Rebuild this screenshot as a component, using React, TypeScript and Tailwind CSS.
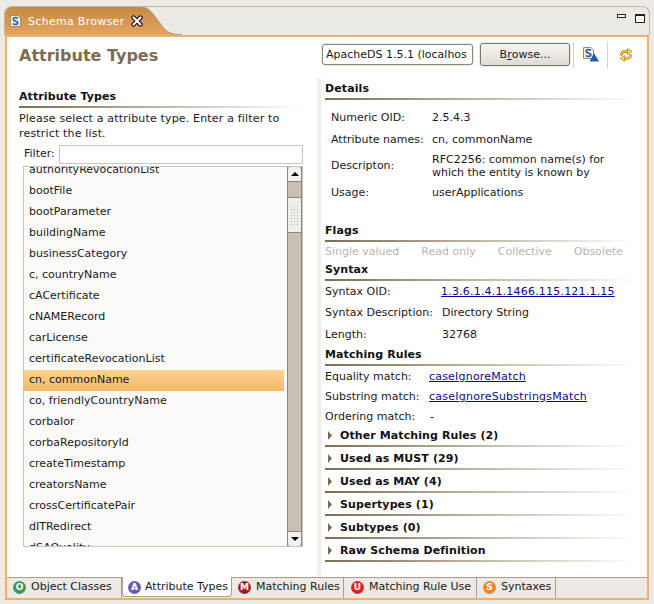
import React from "react";

const attrs = ["authorityRevocationList","bootFile","bootParameter","buildingName","businessCategory","c, countryName","cACertificate","cNAMERecord","carLicense","certificateRevocationList","cn, commonName","co, friendlyCountryName","corbaIor","corbaRepositoryId","createTimestamp","creatorsName","crossCertificatePair","dITRedirect","dSAQuality"];
const sections = ["Other Matching Rules (2)","Used as MUST (29)","Used as MAY (4)","Supertypes (1)","Subtypes (0)","Raw Schema Definition"];
const font = { fontFamily: '"DejaVu Sans", sans-serif' };

function Rule() {
  return <div className="h-[2px] bg-gradient-to-r from-[#7f6d53] via-[#b5a894] via-40% to-white" />;
}

function Heading({ children, className = "" }: { children: React.ReactNode; className?: string }) {
  return (
    <div className={className}>
      <div className="h-[18px] text-[11px] leading-[18px] font-bold tracking-[0.1px] text-[#111]">{children}</div>
      <Rule />
    </div>
  );
}

function Row({ label, children, labelW, className = "h-[21px]" }: { label: string; children: React.ReactNode; labelW: string; className?: string }) {
  return (
    <div className={`flex items-center pt-[2px] ${className}`}>
      <div className={`shrink-0 ${labelW}`}>{label}</div>
      <div>{children}</div>
    </div>
  );
}

function Section({ title }: { title: string }) {
  return (
    <div className="h-[23px]">
      <div className="flex h-[19px] items-center">
        <svg width="15" height="13" viewBox="0 0 15 13" className="shrink-0"><path d="M3 2 L7 6.5 L3 11 Z" fill="#7a6a50" /></svg>
        <span className="text-[11px] font-bold leading-[16px] tracking-[0.1px] text-[#111]">{title}</span>
      </div>
      <Rule />
    </div>
  );
}

function TabBadge({ color, letter }: { color: string; letter: string }) {
  return (
    <span className={`flex h-[13px] w-[13px] shrink-0 items-center justify-center rounded-full text-[9px] font-bold leading-none text-white ${color}`}>{letter}</span>
  );
}

function SchemaIcon({ triangle = false }: { triangle?: boolean }) {
  return (
    <svg width={triangle ? 16 : 11} height={triangle ? 15 : 12} viewBox={triangle ? "0 0 16 15" : "0 0 11 12"} className="shrink-0">
      <path d="M0.5 0.5 H8 L10.5 3 V11.5 H0.5 Z" fill="#f7f3e2" stroke="#9a8c63" />
      <path d="M7.8 3.4 C6.5 2.2 3.2 2.2 3.2 4.4 C3.2 6.5 7.8 5.6 7.8 7.8 C7.8 9.8 4.2 9.8 2.8 8.6" fill="none" stroke="#2f63a8" strokeWidth="1.8" />
      {triangle && <path d="M11 6 L16 14.5 H6.5 Z" fill="#1e5aa8" />}
    </svg>
  );
}

function SyncIcon() {
  return (
    <svg width="16" height="16" viewBox="0 0 16 16">
      <g fill="none" strokeLinecap="round">
        <path d="M3.5 7.5 C3.5 5.6 6 4.5 9 4.5" stroke="#c08a1c" strokeWidth="2.8" />
        <path d="M12.5 8.5 C12.5 10.4 10 11.5 7 11.5" stroke="#c08a1c" strokeWidth="2.8" />
        <path d="M3.5 7.5 C3.5 5.6 6 4.5 9 4.5" stroke="#f8d964" strokeWidth="1.2" />
        <path d="M12.5 8.5 C12.5 10.4 10 11.5 7 11.5" stroke="#f8d964" strokeWidth="1.2" />
      </g>
      <path d="M9.5 1.5 L14 4.5 L9.5 7.5 Z" fill="#f8d964" stroke="#c08a1c" strokeWidth="0.8" />
      <path d="M6.5 8.5 L2 11.5 L6.5 14.5 Z" fill="#f8d964" stroke="#c08a1c" strokeWidth="0.8" />
    </svg>
  );
}

export default function App() {
  return (
    <div style={font} className="flex h-[604px] w-[654px] flex-col overflow-hidden bg-[#edeae5] text-[11px] text-[#1a1a1a]">
      <div className="h-[6px] shrink-0" />
      <div className="mx-[4px] flex h-[29px] shrink-0 items-stretch rounded-t-[8px] border border-b-0 border-[#bdb6ab] bg-[#edeae5]">
        <div className="flex w-[131px] shrink-0 items-center rounded-tl-[7px] bg-gradient-to-b from-[#c78843] to-[#e4a564] pl-[5px]">
          <SchemaIcon />
          <span className="ml-[7px] whitespace-nowrap pt-[2px] text-[11px] tracking-[0.3px] text-white">Schema Browser</span>
          <svg width="12" height="12" viewBox="0 0 12 12" className="relative z-10 ml-[6px] shrink-0">
            <path d="M2.5 2.5 L9.5 9.5 M9.5 2.5 L2.5 9.5" stroke="#000" strokeWidth="4.2" strokeLinecap="round" />
            <path d="M2.5 2.5 L9.5 9.5 M9.5 2.5 L2.5 9.5" stroke="#fff" strokeWidth="2.2" strokeLinecap="round" />
          </svg>
        </div>
        <svg width="46" height="28" viewBox="0 0 46 28" className="shrink-0">
          <defs>
            <linearGradient id="tabFill" x1="0" y1="0" x2="0" y2="1">
              <stop offset="0" stopColor="#c78843" />
              <stop offset="1" stopColor="#e4a564" />
            </linearGradient>
          </defs>
          <path d="M0 0 H4 C14 0 16 6 24 16 C30 25 34 27.5 44 27.5 H46 V28 H0 Z" fill="url(#tabFill)" />
          <path d="M4 0 C14 0 16 6 24 16 C30 25 34 27.5 46 27.5" fill="none" stroke="#a89f91" />
        </svg>
        <div className="flex flex-1 items-start justify-end gap-[9px] pr-[4px] pt-[7px]">
          <div className="h-[4px] w-[9px] border border-[#222] bg-white" />
          <div className="h-[9px] w-[10px] border border-[#222] border-t-[2px] bg-white" />
        </div>
      </div>
      <div className="mx-[5px] flex h-[565px] shrink-0 flex-col border-[2px] border-[#eeb06c] bg-white">
        <div className="flex h-[540px] flex-col">
          <div className="flex h-[35px] shrink-0 items-center pl-[12px] pr-[4px]">
            <div className="pt-[2px] text-[16px] font-bold text-[#7d6b52]">Attribute Types</div>
            <div className="ml-auto flex items-center">
              <div className="flex h-[21px] w-[151px] items-center overflow-hidden whitespace-nowrap rounded-[3px] border border-[#8d8577] bg-white pl-[3px] pt-[2px] shadow-[0_0_0_1px_#edeae5]">ApacheDS 1.5.1 (localhos</div>
              <div className="ml-[7px] flex h-[23px] w-[90px] items-center justify-center rounded-[3px] border border-[#7d7568] bg-gradient-to-b from-[#f7f5f2] to-[#dfdbd4] pt-[2px] shadow-[0_0_0_1px_#edeae5]">B<span className="underline">r</span>owse...</div>
              <div className="ml-[3px] h-[26px] w-[1px] bg-[#d5d1ca]" />
              <div className="flex w-[33px] justify-center"><SchemaIcon triangle /></div>
              <div className="h-[26px] w-[1px] bg-[#d5d1ca]" />
              <div className="flex w-[35px] justify-center"><SyncIcon /></div>
            </div>
          </div>
          <div className="flex min-h-0 flex-1">
            <div className="flex w-[310px] shrink-0 flex-col pl-[12px] pr-[14px] pt-[16px]">
              <Heading>Attribute Types</Heading>
              <div className="mt-[3px] leading-[15px] tracking-[0.17px]">Please select a attribute type. Enter a filter to<br />restrict the list.</div>
              <div className="mt-[4px] flex h-[19px] items-center">
                <span className="w-[40px] pl-[5px]">Filter:</span>
                <div className="h-[19px] flex-1 border border-[#c9c5bd] bg-white" />
              </div>
              <div className="ml-[4px] mt-[2px] flex h-[381px] border border-[#c9c5bd] bg-[#fbfaf8]">
                <div className="w-[260px] shrink-0 overflow-hidden">
                  <div className="mt-[-7px]">
                    {attrs.map((a) => (
                      <div key={a} className={`flex h-[21px] items-center pl-[5px] ${a === "cn, commonName" ? "bg-gradient-to-b from-[#fbd28f] to-[#f6b767]" : ""}`}>{a}</div>
                    ))}
                  </div>
                </div>
                <div className="ml-auto flex w-[15px] shrink-0 flex-col border-x border-[#8e8677] bg-[#c9c0b3]">
                  <div className="flex h-[15px] items-center justify-center rounded-t-[4px] border-b border-[#8e8677] bg-[#f3f1ed]"><div className="h-0 w-0 border-x-[4px] border-b-[4px] border-x-transparent border-b-black" /></div>
                  <div className="mt-[15px] flex h-[36px] flex-col items-center justify-center border-y border-[#8e8677] bg-[#f0eeea]">
                    <div className="h-[20px] w-[9px] bg-[radial-gradient(#b5ada0_1px,transparent_1px)] bg-[length:3px_3px]" />
                  </div>
                  <div className="flex-1" />
                  <div className="flex h-[15px] items-center justify-center rounded-b-[4px] border-t border-[#8e8677] bg-[#f3f1ed]"><div className="h-0 w-0 border-x-[4px] border-t-[4px] border-x-transparent border-t-black" /></div>
                </div>
              </div>
            </div>
            <div className="mb-[2px] mt-[6px] w-[4px] shrink-0 bg-[#f1efeb]" />
            <div className="min-w-0 flex-1 pl-[4px] pr-[12px] pt-[8px]">
              <Heading>Details</Heading>
              <div className="pl-[6px] pt-[7px]">
                <Row label="Numeric OID:" labelW="w-[101px]">2.5.4.3</Row>
                <Row label="Attribute names:" labelW="w-[101px]" className="mt-[1px] h-[21px]">cn, commonName</Row>
                <div className="flex h-[32px] items-center">
                  <div className="w-[101px] shrink-0">Descripton:</div>
                  <div className="leading-[13px]">RFC2256: common name(s) for<br />which the entity is known by</div>
                </div>
                <Row label="Usage:" labelW="w-[101px]">userApplications</Row>
              </div>
              <Heading className="mt-[19px]">Flags</Heading>
              <div className="flex h-[18px] items-center gap-[22px] whitespace-nowrap pt-[2px] text-[#b9b5ae]">
                <span>Single valued</span><span>Read only</span><span>Collective</span><span>Obsolete</span>
              </div>
              <Heading className="mt-[1px]">Syntax</Heading>
              <Row label="Syntax OID:" labelW="w-[116px]"><a className="tracking-[0.2px] text-[#0a0a8c] underline">1.3.6.1.4.1.1466.115.121.1.15</a></Row>
              <Row label="Syntax Description:" labelW="w-[117px]">Directory String</Row>
              <Row label="Length:" labelW="w-[117px]" className="mt-[1px] h-[21px]">32768</Row>
              <Heading className="mt-[1px]">Matching Rules</Heading>
              <Row label="Equality match:" labelW="w-[104px]" className="h-[20px]"><a className="tracking-[0.2px] text-[#0a0a8c] underline">caseIgnoreMatch</a></Row>
              <Row label="Substring match:" labelW="w-[104px]" className="h-[20px]"><a className="tracking-[0.24px] text-[#0a0a8c] underline">caseIgnoreSubstringsMatch</a></Row>
              <Row label="Ordering match:" labelW="w-[105px]" className="h-[20px]"><a className="text-[#0a0a8c]">-</a></Row>
              <div>
                {sections.map((s) => <Section key={s} title={s} />)}
              </div>
            </div>
          </div>
        </div>
        <div className="flex h-[21px] items-stretch border-t border-[#a89f91] bg-[#edeae5]">
          {[
            ["Object Classes", "bg-[#3f9a52]", "O", 115, "pl-[6px] gap-[5px]"],
            ["Attribute Types", "bg-[#6a5bb5]", "A", 110, "pl-[5px] gap-[4px]"],
            ["Matching Rules", "bg-[#a81c1c]", "M", 112, "pl-[6px] gap-[5px]"],
            ["Matching Rule Use", "bg-[#dd2222]", "U", 133, "pl-[7px] gap-[5px]"],
            ["Syntaxes", "bg-[#f0862a]", "S", 79, "pl-[6px] gap-[5px]"],
          ].map(([label, color, letter, w, pad], i) => (
            <div
              key={label as string}
              style={{ width: w as number }}
              className={`flex items-center ${pad as string} ${i === 1 ? "h-[20px] -mt-[1px] pt-[2px] rounded-b-[4px] border-x border-b border-[#a89f91] bg-white" : "pb-[2px] border-r border-[#a89f91]"}`}
            >
              <TabBadge color={color as string} letter={letter as string} />
              <span className="whitespace-nowrap">{label as string}</span>
            </div>
          ))}
        </div>
      </div>
    </div>
  );
}
